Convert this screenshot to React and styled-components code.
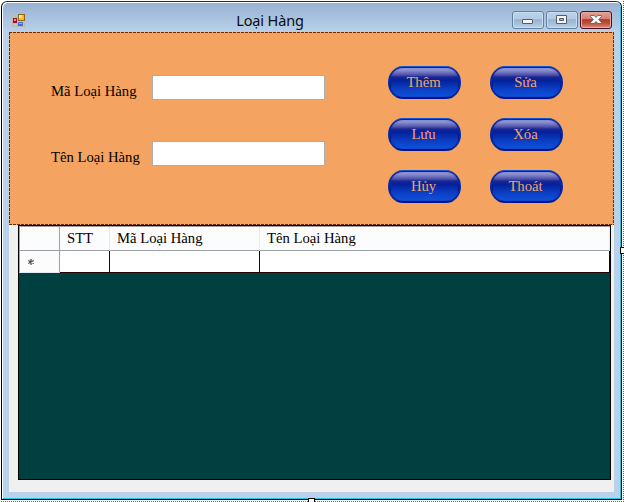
import React from "react";
import styled, { createGlobalStyle } from "styled-components";

const GlobalStyle = createGlobalStyle`
  * { box-sizing: border-box; }
  body { margin: 0; background: #fff; overflow: hidden; }
`;

const serif = `"Liberation Serif", "Times New Roman", serif`;

const Designer = styled.div`
  position: relative;
  width: 624px;
  height: 502px;
  padding: 1px 0 0 1px;
  background:
    repeating-linear-gradient(90deg, #fff 0 1px, #666 1px 2px) 0 501px / 624px 1px no-repeat,
    repeating-linear-gradient(180deg, #fff 0 1px, #666 1px 2px) 623px 0 / 1px 502px no-repeat,
    #fff;
`;

const Window = styled.div`
  width: 621px;
  height: 499px;
  border: 1px solid #000;
  border-top-color: #22302c;
  border-radius: 6px 6px 0 0;
  background: #fff;
  padding: 1px 0 0 1px;
`;

const Frame = styled.div`
  display: flex;
  flex-direction: column;
  height: 496px;
  border-right: 1px solid #22c8e8;
  border-bottom: 1px solid #22c8e8;
  border-radius: 5px 5px 0 0;
  padding: 0 6px 6px;
  background: linear-gradient(#98b4d2 0, #a5bfdc 12px, #b9d1ea 29px, #b9d1ea 100%);
`;

const TitleBar = styled.header`
  display: grid;
  grid-template-columns: 28px 1fr 111px;
  height: 29px;
  flex: none;
`;

const AppIcon = styled.svg`
  display: block;
  margin: 10px 0 0 3px;
`;

const Title = styled.h1`
  margin: 0;
  padding: 7px 0 0;
  text-align: center;
  font: 400 14.5px/20px "Noto Sans", "Open Sans", sans-serif;
  letter-spacing: -0.15px;
  color: #0b0b0b;
  white-space: nowrap;
`;

const Controls = styled.div`
  display: flex;
  gap: 2px;
  padding: 8px 0 0 9px;
`;

const Control = styled.button`
  display: flex;
  align-items: center;
  justify-content: center;
  flex: none;
  width: 32px;
  height: 18px;
  padding: 0;
  border: 1px solid ${(p) => (p.$danger ? "#4a1220" : "#64809f")};
  border-radius: 3px;
  box-shadow: inset 0 0 0 1px ${(p) => (p.$danger ? "#e5aba0" : "#cbdef1")};
  background: ${(p) =>
    p.$danger
      ? "linear-gradient(#e3a195 0, #d47e6f 46%, #b53b27 47%, #bc4e38 70%, #dc9180 100%)"
      : "linear-gradient(#bdd2e9 0, #b2cae4 46%, #98b4d1 47%, #a3bedb 70%, #bbd4ed 100%)"};
`;

const Client = styled.main`
  flex: 1;
  display: flex;
  flex-direction: column;
  background: #f0f0f0;
`;

const Panel = styled.section`
  display: flex;
  justify-content: space-between;
  width: 605px;
  height: 193px;
  padding: 34px 51px 0 42px;
  background:
    repeating-linear-gradient(90deg, #64300c 0 3px, #f4a460 3px 4px) 0 0 / 100% 1px no-repeat,
    repeating-linear-gradient(90deg, #64300c 0 3px, #f4a460 3px 4px) 0 100% / 100% 1px no-repeat,
    repeating-linear-gradient(180deg, #64300c 0 3px, #f4a460 3px 4px) 0 0 / 1px 100% no-repeat,
    repeating-linear-gradient(180deg, #64300c 0 3px, #f4a460 3px 4px) 100% 0 / 1px 100% no-repeat,
    #f4a460;
`;

const Fields = styled.div`
  display: flex;
  flex-direction: column;
  gap: 41px;
  padding-top: 9px;
`;

const Field = styled.label`
  display: grid;
  grid-template-columns: 101px 173px;
  height: 25px;
  font: 14.67px/17px ${serif};
  color: #000;
  white-space: nowrap;
`;

const FieldLabel = styled.span`
  padding-top: 8px;
`;

const TextBox = styled.input`
  width: 173px;
  height: 25px;
  border: 1px solid #abadb3;
  border-radius: 0;
  background: #fff;
  outline: none;
`;

const Actions = styled.div`
  display: grid;
  grid-template-columns: 73px 73px;
  grid-auto-rows: 33px;
  column-gap: 29px;
  row-gap: 19px;
`;

const ActionButton = styled.button`
  width: 73px;
  height: 33px;
  padding: 0 2px 0 0;
  border: 0;
  border-radius: 15px / 16.5px;
  background:
    linear-gradient(#9c9fd8 0, #8285c9 3px, #4b50a9 7px, #1b2795 9px, #03209a 12px, #0a3cc0 20px, #0e50da 28px) 3px 2px / 67px 29px no-repeat,
    linear-gradient(#0c55dc, #03128c 55%, #020a78);
  box-shadow: inset 0 1px 0 #0c56d8, inset 0 2px 1px #061a91, inset 2px 0 1px #052ba8, inset -2px 0 1px #052ba8, inset 0 -2px 1px #04107d;
  font: 14.67px/33px ${serif};
  color: #f4a460;
`;

const DataGrid = styled.section`
  width: 593px;
  height: 255px;
  margin-left: 9px;
  border: 1px solid #000;
  background: #004040;
`;

const GridRow = styled.div`
  display: grid;
  grid-template-columns: 41px 50px 150px 350px;
  height: ${(p) => (p.$header ? "25px" : "22px")};
  border-top: ${(p) => (p.$header ? "1px solid #a0a0a0" : "0")};
`;

const HeaderCell = styled.div`
  padding: 3px 0 0 7px;
  border-right: 1px solid #e3ebf5;
  border-bottom: 1px solid #9aa0a8;
  background: #fcfcfc;
  font: 14.67px/17px ${serif};
  color: #000;
  white-space: nowrap;
`;

const RowHeader = styled.div`
  display: flex;
  align-items: center;
  padding-left: 8px;
  background: #fcfcfc;
  border-left: 1px solid #a0a0a0;
  border-right: 1px solid #a0a0a0;
  border-bottom: 1px solid ${(p) => (p.$corner ? "#9aa0a8" : "#e3ebf5")};
`;

const Cell = styled.div`
  background: #fff;
  border-right: 1px solid #2b0000;
  border-bottom: 1px solid #2b0000;
`;

const Handle = styled.i`
  position: absolute;
  left: ${(p) => p.$x}px;
  top: ${(p) => p.$y}px;
  width: 7px;
  height: 7px;
  border: 1px solid #000;
  background: #fff;
`;

const fields = ["Mã Loại Hàng", "Tên Loại Hàng"];
const actions = ["Thêm", "Sửa", "Lưu", "Xóa", "Hủy", "Thoát"];
const columns = ["STT", "Mã Loại Hàng", "Tên Loại Hàng"];

function FormIcon() {
  return (
    <AppIcon width="14" height="14" viewBox="0 0 14 14" shapeRendering="crispEdges">
      <path d="M.5.5h5v4m-5-4v13h12v-5M5.5 9.5v4M1 10.5h5" fill="none" stroke="#bcb7b5" />
      <rect x="6" y="1" width="7" height="7" fill="#8b6819" />
      <rect x="7" y="2" width="5" height="5" fill="#f2bd25" />
      <rect x="7" y="2" width="3" height="3" fill="#ffe287" />
      <rect x="1" y="5" width="4" height="5" fill="#9c1313" />
      <rect x="2" y="6" width="2" height="2" fill="#f08b84" />
      <rect x="6" y="9" width="5" height="4" fill="#3a6fdc" />
      <rect x="7" y="10" width="3" height="1" fill="#91b9ff" />
    </AppIcon>
  );
}

export default function App() {
  return (
    <>
      <GlobalStyle />
      <Designer>
        <Window>
          <Frame>
            <TitleBar>
              <FormIcon />
              <Title>Loại Hàng</Title>
              <Controls>
                <Control aria-label="Minimize">
                  <svg width="12" height="12" viewBox="0 0 12 12">
                    <rect x=".5" y="5.5" width="10" height="4" rx=".5" fill="#f4f4f4" stroke="#555c68" />
                  </svg>
                </Control>
                <Control aria-label="Maximize">
                  <svg width="12" height="10" viewBox="0 0 12 10">
                    <path d="M.5.5h10v8h-10zM3.5 3.5v2h4v-2z" fill="#f4f4f4" fillRule="evenodd" stroke="#555c68" />
                  </svg>
                </Control>
                <Control $danger aria-label="Close">
                  <svg width="12" height="10" viewBox="0 0 12 10">
                    <path
                      d="M.5.5h3.700L6 2.400 7.800.5h3.700v1L8.700 4.500l2.800 3v1H7.800L6 6.600 4.200 8.500H.5v-1l2.800-3-2.800-3z"
                      fill="#f8f8f8"
                      stroke="#5c5560"
                      strokeWidth=".8"
                    />
                  </svg>
                </Control>
              </Controls>
            </TitleBar>
            <Client>
              <Panel>
                <Fields>
                  {fields.map((name) => (
                    <Field key={name}>
                      <FieldLabel>{name}</FieldLabel>
                      <TextBox />
                    </Field>
                  ))}
                </Fields>
                <Actions>
                  {actions.map((name) => (
                    <ActionButton key={name}>{name}</ActionButton>
                  ))}
                </Actions>
              </Panel>
              <DataGrid>
                <GridRow $header>
                  <RowHeader $corner />
                  {columns.map((name) => (
                    <HeaderCell key={name}>{name}</HeaderCell>
                  ))}
                </GridRow>
                <GridRow>
                  <RowHeader>
                    <svg width="6" height="6" viewBox="0 0 6 6">
                      <path d="M3 0v6M.3 1.5l5.400 3M.3 4.5l5.400-3" stroke="#444" strokeWidth="1.2" />
                    </svg>
                  </RowHeader>
                  <Cell />
                  <Cell />
                  <Cell />
                </GridRow>
              </DataGrid>
            </Client>
          </Frame>
        </Window>
        <Handle $x={620} $y={247} />
        <Handle $x={308} $y={498} />
      </Designer>
    </>
  );
}
